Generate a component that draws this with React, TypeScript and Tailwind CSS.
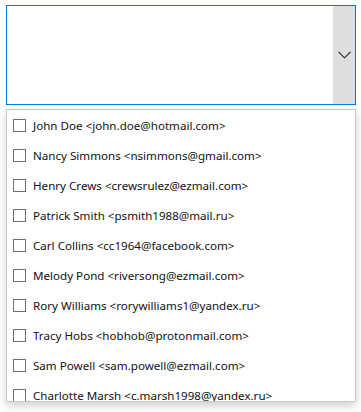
export default function App() {
  const people = [
    "John Doe <john.doe@hotmail.com>",
    "Nancy Simmons <nsimmons@gmail.com>",
    "Henry Crews <crewsrulez@ezmail.com>",
    "Patrick Smith <psmith1988@mail.ru>",
    "Carl Collins <cc1964@facebook.com>",
    "Melody Pond <riversong@ezmail.com>",
    "Rory Williams <rorywilliams1@yandex.ru>",
    "Tracy Hobs <hobhob@protonmail.com>",
    "Sam Powell <sam.powell@ezmail.com>",
    "Charlotte Marsh <c.marsh1998@yandex.ru>",
  ];

  return (
    <div className="w-[361px] h-[412px] bg-white pt-[5px] pl-[6px] font-['Noto_Sans',sans-serif] overflow-hidden">
      {/* Multi-select box */}
      <div className="w-[350px] h-[100px] border border-[#0078d7] flex">
        <div className="flex-1" />
        <div className="w-[22px] bg-[#dedede] flex items-center justify-center">
          <svg width="13" height="8" viewBox="0 0 13 8" fill="none">
            <path d="M0.5 0.8 L6.5 6.8 L12.5 0.8" stroke="#222" strokeWidth="1.1" />
          </svg>
        </div>
      </div>

      {/* Dropdown list */}
      <div className="mt-[4px] w-[350px] h-[293px] border border-[#c8c8c8] bg-white overflow-hidden shadow-[0_4px_8px_rgba(0,0,0,0.18)]">
        {people.map((p) => (
          <div key={p} className="h-[30px] flex items-center pl-[6px] gap-[7px]">
            <span className="w-[13px] h-[13px] border border-[#6f6f6f] bg-white shrink-0" />
            <span className="text-[11.6px] leading-[14px] pt-[1px] text-[#111] whitespace-nowrap">{p}</span>
          </div>
        ))}
      </div>
    </div>
  );
}
